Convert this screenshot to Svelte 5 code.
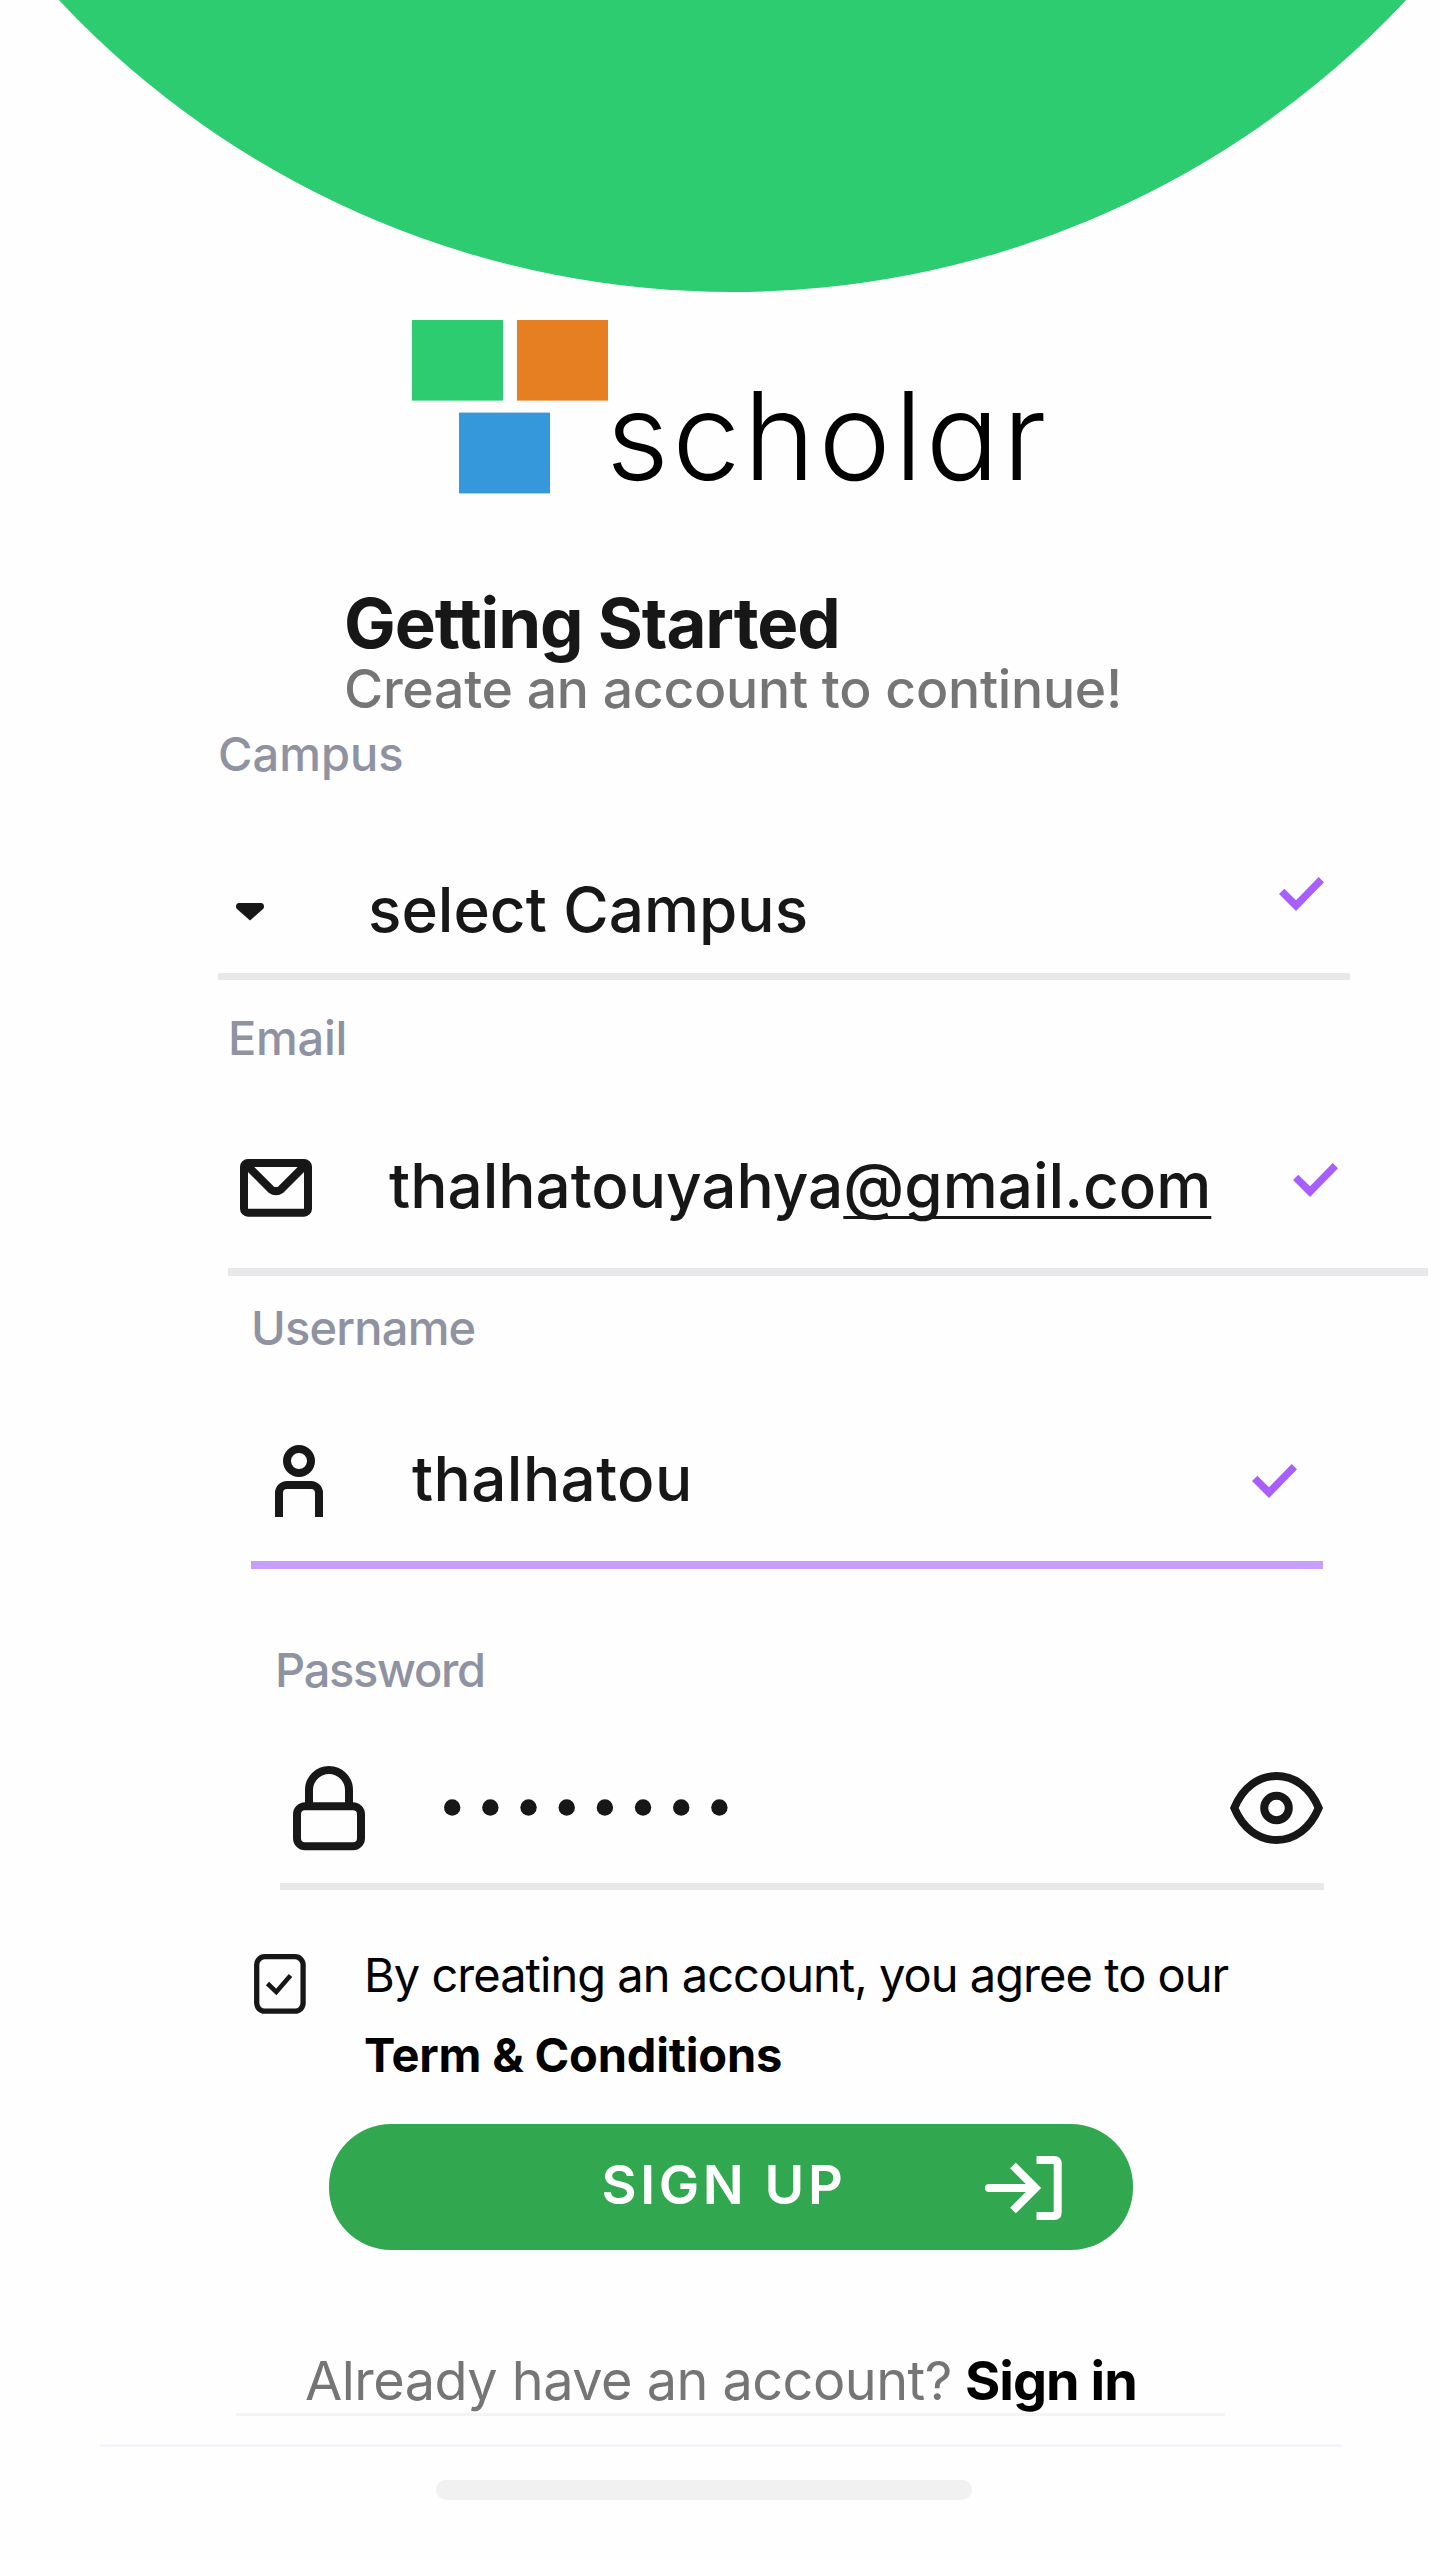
<script>
  const dots = Array.from({ length: 8 }, (_, i) => 8.2 + i * 38.17);
</script>

{#snippet check()}
  <svg class="check" viewBox="0 0 45 34" width="45" height="34">
    <path d="M5.3 11.7L17 23.2 39.7 0 45 5.3 17 34 0 17z" />
  </svg>
{/snippet}

<main>
  <svg class="dome" viewBox="0 0 1440 292" width="1440" height="292">
    <circle cx="732.5" cy="-631" r="923" />
  </svg>

  <div class="brand">
    <svg class="blocks" viewBox="0 0 196 174" width="196" height="174">
      <rect class="green" x="0" y="0" width="91" height="80.6" />
      <rect class="orange" x="105" y="0" width="91" height="80.6" />
      <rect class="blue" x="47" y="92.6" width="91" height="80.8" />
    </svg>
    <span class="wordmark">scholar</span>
  </div>

  <header>
    <h1>Getting Started</h1>
    <p>Create an account to continue!</p>
  </header>

  <section class="field campus">
    <div class="label">Campus</div>
    <div class="control">
      <svg class="caret" viewBox="0 0 28 17.4" width="28" height="17.4">
        <path d="M3 0h22q3 0 3 4 0 1-1 2L14 17.4 1 6Q0 5 0 4 0 0 3 0z" />
      </svg>
      <span class="value">select Campus</span>
      {@render check()}
    </div>
  </section>

  <section class="field email">
    <div class="label">Email</div>
    <div class="control">
      <svg class="line-icon" viewBox="0 0 72 58" width="72" height="58">
        <rect x="4" y="4" width="64" height="49.7" rx="4" />
        <path d="M6 5.4L31 30.4Q36 34 41 30.4L66 5.4" />
      </svg>
      <span class="value">thalhatouyahya<span class="domain">@gmail.com</span></span>
      {@render check()}
    </div>
  </section>

  <section class="field username">
    <div class="label">Username</div>
    <div class="control">
      <svg class="line-icon" viewBox="0 0 48 72" width="48" height="72">
        <circle cx="24" cy="16" r="12" />
        <path d="M4 72V48a8 8 0 0 1 8-8h24a8 8 0 0 1 8 8v24" />
      </svg>
      <span class="value">thalhatou</span>
      {@render check()}
    </div>
  </section>

  <section class="field password">
    <div class="label">Password</div>
    <div class="control">
      <svg class="line-icon lock" viewBox="0 0 72 84.4" width="72" height="84.4">
        <rect x="4" y="40.3" width="64" height="40" rx="8" />
        <path d="M16 40V24a20 20 0 0 1 40 0v16" />
      </svg>
      <svg class="dots" viewBox="0 0 284 17" width="284" height="17">
        {#each dots as x}
          <circle cx={x} cy="8.5" r="8.2" />
        {/each}
      </svg>
      <svg class="line-icon eye" viewBox="0 0 93 72" width="93" height="72">
        <path d="M4.3 36C13 15 29 4 46.5 4S80 15 88.7 36C80 57 64 68 46.5 68S13 57 4.3 36z" />
        <circle cx="46.5" cy="36" r="12.3" />
      </svg>
    </div>
  </section>

  <div class="terms">
    <svg class="checkbox" viewBox="0 0 52 60" width="52" height="60">
      <rect x="2.7" y="2.7" width="46.4" height="54.4" rx="8" />
      <path d="M13.5 29.5L22.3 38 36.5 21.5" />
    </svg>
    <div class="agreement">
      <div class="agree">By creating an account, you agree to our</div>
      <div class="conditions">Term &amp; Conditions</div>
    </div>
  </div>

  <button>
    <span>SIGN UP</span>
    <svg viewBox="0 0 77 64" width="77" height="64">
      <path d="M51.5 4H69q3.7 0 3.7 4v48q0 4-3.7 4H51.5M28 9.5L50.5 32 28 54.5" />
      <path class="shaft" d="M4 32h44" />
    </svg>
  </button>

  <footer>
    <div class="signin">
      <span class="ask">Already have an account?</span>
      <span class="go">Sign in</span>
    </div>
    <div class="rule"></div>
    <div class="handle"></div>
  </footer>
</main>

<style>
  :global(body) {
    background: #fefefe;
  }
  main {
    display: flex;
    flex-direction: column;
    align-items: flex-start;
    width: 1440px;
    height: 2560px;
    overflow: hidden;
    background: #fefefe;
    color: #171717;
    font-family: Inter, 'Liberation Sans', sans-serif;
    white-space: nowrap;
  }
  svg {
    display: block;
    flex: none;
  }
  .dome {
    fill: #2ecc71;
  }
  .brand {
    display: flex;
    height: 174px;
    margin: 28px 0 0 412px;
  }
  .green {
    fill: #2ecc71;
  }
  .orange {
    fill: #e67e22;
  }
  .blue {
    fill: #3498db;
  }
  .wordmark {
    margin: 46px 0 0 -2px;
    font-size: 122px;
    line-height: 140px;
    font-weight: 300;
    letter-spacing: 3.2px;
    font-feature-settings: 'cv11' 1;
    color: #000;
  }
  header {
    margin: 89px 0 0 344px;
  }
  h1 {
    margin: 0;
    font-size: 69px;
    line-height: 80px;
    font-weight: 700;
    letter-spacing: -1.1px;
  }
  p {
    margin: 0;
    padding-top: 1px;
    font-size: 53.5px;
    line-height: 50px;
    font-weight: 500;
    letter-spacing: -0.27px;
    color: #757575;
  }
  .label {
    font-size: 47px;
    line-height: 50px;
    font-weight: 500;
    color: #8f92a1;
  }
  .control {
    box-sizing: border-box;
    display: flex;
    align-items: center;
    border-bottom: 8px solid #e8e8ea;
  }
  .value {
    font-size: 62px;
    line-height: 76px;
    font-weight: 500;
  }
  .check {
    margin-left: auto;
    fill: #a95eff;
  }
  .line-icon {
    fill: none;
    stroke: #171717;
    stroke-width: 8;
  }

  .campus {
    width: 1132px;
    margin: 15px 0 0 218px;
  }
  .campus .label {
    letter-spacing: 0;
  }
  .campus .control {
    height: 134px;
    margin-top: 67px;
    border-bottom-width: 7px;
    padding: 0 26px 0 18px;
  }
  .caret {
    margin-top: 5px;
    fill: #171717;
  }
  .campus .value {
    margin-left: 104px;
    letter-spacing: 0;
  }
  .campus .check {
    margin-bottom: 31px;
  }

  .email {
    width: 1200px;
    margin: 33px 0 0 228px;
  }
  .email .label {
    letter-spacing: -0.3px;
  }
  .email .control {
    height: 173px;
    margin-top: 40px;
    padding: 0 90px 0 12px;
  }
  .email .line-icon {
    margin-top: 5px;
  }
  .email .value {
    margin-left: 77px;
  }
  .domain {
    text-decoration: underline;
    text-decoration-thickness: 3px;
    text-decoration-skip-ink: none;
    text-underline-offset: 8px;
  }
  .email .check {
    margin-bottom: 11px;
  }

  .username {
    width: 1072px;
    margin: 27px 0 0 251px;
  }
  .username .label {
    letter-spacing: -0.8px;
  }
  .username .control {
    height: 173px;
    margin-top: 43px;
    padding: 0 26px 0 24px;
    border-color: #c89efc;
  }
  .username .line-icon {
    margin-top: 5px;
  }
  .username .value {
    margin-left: 89px;
    letter-spacing: 0.4px;
  }
  .username .check {
    margin-top: 5px;
  }

  .password {
    width: 1044px;
    margin: 76px 0 0 280px;
  }
  .password .label {
    margin-left: -5px;
    letter-spacing: -1.3px;
  }
  .password .control {
    height: 159px;
    margin-top: 36px;
    padding: 0 1px 0 13px;
    border-bottom-width: 7px;
  }
  .lock {
    margin-top: 3px;
  }
  .dots {
    margin-left: 79px;
    fill: #171717;
  }
  .eye {
    margin-left: auto;
    margin-top: 2px;
  }

  .terms {
    display: flex;
    align-items: flex-start;
    gap: 58px;
    margin: 45px 0 0 254px;
  }
  .checkbox {
    margin-top: 19px;
    fill: none;
    stroke: #171717;
    stroke-width: 5.3;
  }
  .checkbox path {
    stroke-width: 4.6;
  }
  .agreement {
    font-size: 47px;
    line-height: 80px;
    color: #000;
  }
  .agree {
    letter-spacing: -0.97px;
  }
  .conditions {
    font-weight: 700;
    letter-spacing: -0.2px;
  }

  button {
    display: flex;
    align-items: center;
    width: 804px;
    height: 126px;
    margin: 29px 0 0 328.5px;
    padding: 0 71px 0 273px;
    border: 0;
    border-radius: 62px;
    background: #31a84f;
    color: #fff;
    font-family: inherit;
    box-sizing: border-box;
  }
  button span {
    margin-bottom: 5px;
    font-size: 54px;
    line-height: 66px;
    font-weight: 600;
    letter-spacing: 3.6px;
  }
  button svg {
    margin-left: auto;
    margin-top: 1px;
    fill: none;
    stroke: #fff;
    stroke-width: 8;
  }
  .shaft {
    stroke-linecap: round;
  }

  footer {
    display: flex;
    flex-direction: column;
    margin: 98px 0 0 100px;
    width: 1241px;
  }
  .signin {
    display: flex;
    width: 989px;
    box-sizing: border-box;
    height: 68px;
    margin-left: 136px;
    padding-left: 69px;
    border-bottom: 3px solid #f2f5f8;
    font-size: 54px;
    line-height: 65px;
  }
  .ask {
    width: 660px;
    letter-spacing: -0.52px;
    color: #757575;
  }
  .go {
    font-weight: 700;
    letter-spacing: -1px;
    color: #000;
  }
  .rule {
    height: 3px;
    margin-top: 28px;
    background: #f3f4f7;
  }
  .handle {
    width: 536px;
    height: 20px;
    margin: 33px 0 0 336px;
    border-radius: 10px;
    background: #f1f1f1;
  }
</style>
